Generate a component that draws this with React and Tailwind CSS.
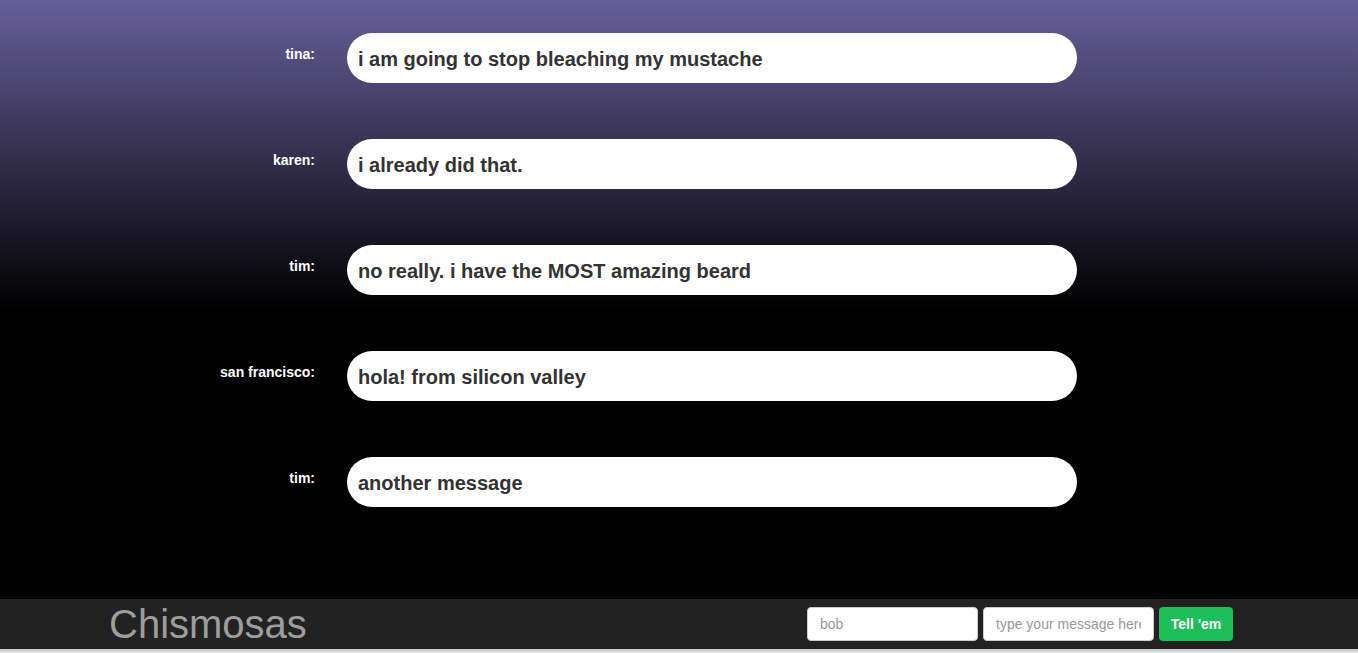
import React from "react";

const messages = [
  { name: "tina:", text: "i am going to stop bleaching my mustache" },
  { name: "karen:", text: "i already did that." },
  { name: "tim:", text: "no really. i have the MOST amazing beard" },
  { name: "san francisco:", text: "hola! from silicon valley" },
  { name: "tim:", text: "another message" },
];

export default function App() {
  return (
    <div
      className="h-[653px] flex flex-col overflow-hidden"
      style={{ fontFamily: '"Liberation Sans", Arial, Helvetica, sans-serif' }}
    >
      <main className="flex-1 bg-[linear-gradient(to_bottom,#675f9a_0px,#000_310px)] bg-black">
        <div className="flex flex-col gap-[56px] pt-[33px]">
          {messages.map((m, i) => (
            <div key={i} className="flex gap-[32px]">
              <div className="w-[315px] shrink-0 text-right pt-[11px] text-[14px] leading-[20px] font-bold text-white">
                {m.name}
              </div>
              <div className="w-[730px] h-[50px] rounded-[25px] bg-white flex items-center px-[11px] pt-[2px] text-[20px] leading-[28px] font-bold text-[#333]">
                {m.text}
              </div>
            </div>
          ))}
        </div>
      </main>
      <footer className="h-[50px] shrink-0 bg-[#222]">
        <div className="w-[1140px] mx-auto h-full flex items-center justify-between pr-[16px]">
          <div className="text-[40px] leading-[40px] text-[#9d9d9d]">Chismosas</div>
          <div className="flex items-center gap-[5px]">
            <input
              className="w-[171px] h-[34px] rounded-[4px] border border-[#ccc] bg-white px-[12px] text-[14px] text-[#555] placeholder:text-[#999] outline-none"
              placeholder="bob"
            />
            <input
              className="w-[171px] h-[34px] rounded-[4px] border border-[#ccc] bg-white px-[12px] text-[14px] text-[#555] placeholder:text-[#999] outline-none"
              placeholder="type your message here"
            />
            <button className="w-[74px] h-[34px] rounded-[4px] bg-[#1dbf58] text-white text-[14px] font-bold">
              Tell 'em
            </button>
          </div>
        </div>
      </footer>
      <div className="h-[4px] shrink-0 bg-[linear-gradient(to_bottom,#c4c4c4,#e6e6e6)]" />
    </div>
  );
}
